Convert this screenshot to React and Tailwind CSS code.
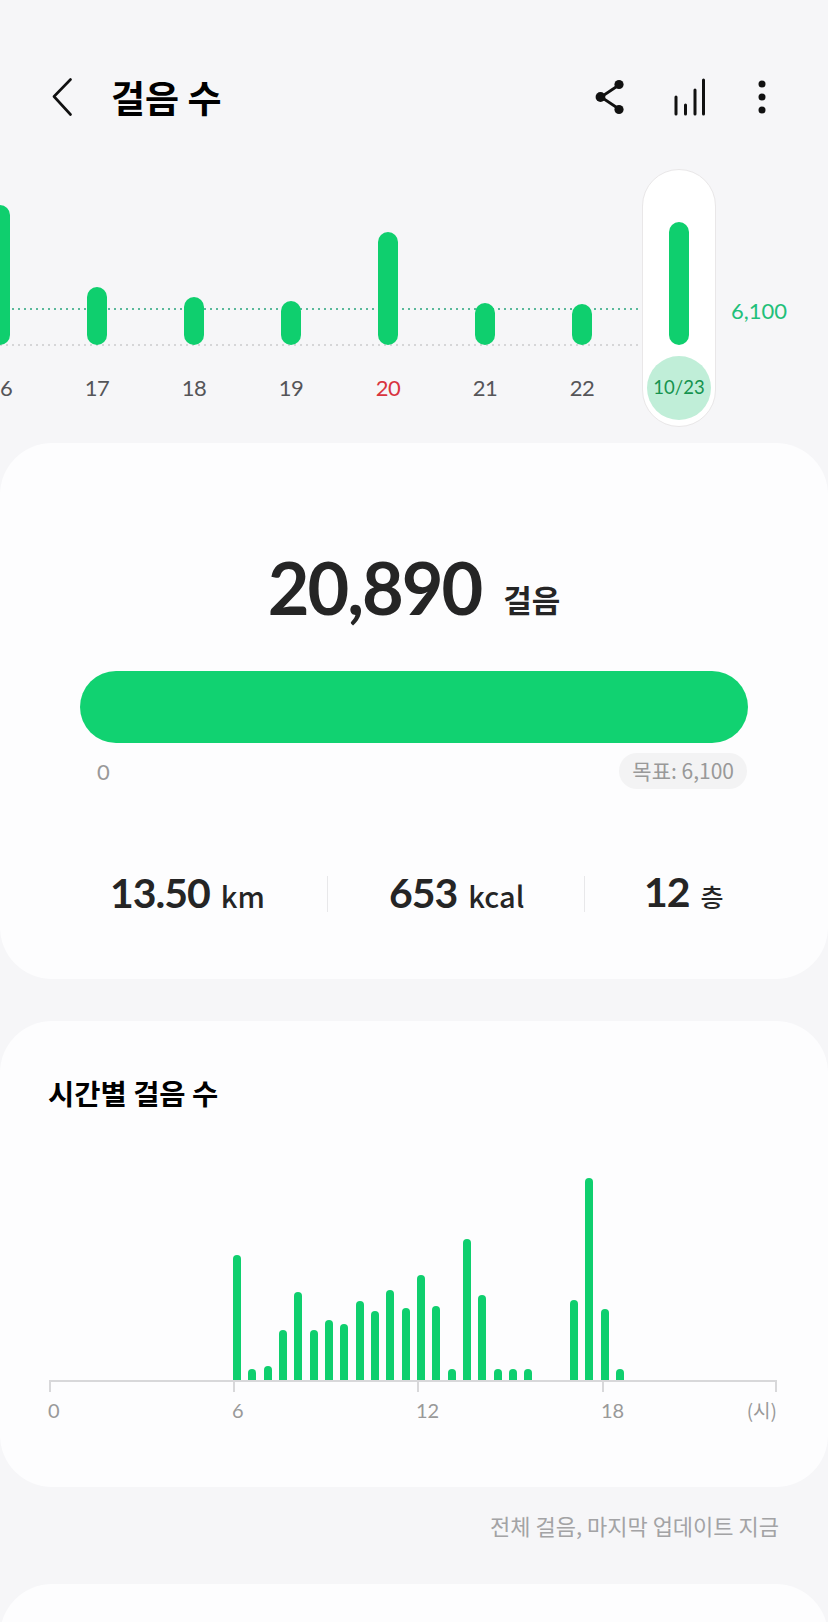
const days = [
  { label: "16", h: 140 },
  { label: "17", h: 58 },
  { label: "18", h: 48 },
  { label: "19", h: 44 },
  { label: "20", h: 113, red: true },
  { label: "21", h: 42 },
  { label: "22", h: 41 },
];
const hourly = [125, 11, 14, 50, 88, 50, 60, 56, 79, 69, 90, 72, 105, 74, 11, 141, 85, 11, 11, 11, 0, 0, 80, 202, 71, 11];
const slots = [...Array(12).fill(0), ...hourly];

const ko = "font-['Noto_Sans_CJK_KR','Lato',sans-serif]";
const lato = "font-['Lato','Noto_Sans_CJK_KR',sans-serif]";

function Stat({ value, unit, unitClass }) {
  return (
    <div className="flex items-baseline justify-center">
      <span className={`${lato} text-[41px] leading-[50px] font-bold text-[#252525] tracking-[-1px]`}>{value}</span>
      <span className={`${ko} ml-[11px] leading-[50px] font-medium text-[#252525] ${unitClass}`}>{unit}</span>
    </div>
  );
}

export default function App() {
  return (
    <div className="h-[1622px] w-[828px] overflow-hidden bg-[#f6f6f8]">
      <header className="mt-[60px] flex h-[74px] items-center pl-[52px]">
        <svg width="20" height="38" viewBox="0 0 20 38" fill="none" stroke="#111" strokeWidth="2.6" strokeLinecap="round" strokeLinejoin="round">
          <path d="M18.5 1.5 L2 18.5 L18.5 36.5" />
        </svg>
        <h1 className={`${ko} ml-[39px] text-[37px] leading-[50px] font-bold text-black`}>걸음 수</h1>
        <svg className="ml-auto" width="32" height="36" viewBox="0 0 32 36" fill="#111" stroke="#111">
          <path d="M24 6 L6 18 L24 30" fill="none" strokeWidth="2.8" />
          <circle cx="24" cy="5.5" r="4.6" stroke="none" />
          <circle cx="5.5" cy="18" r="4.9" stroke="none" />
          <circle cx="24" cy="30.5" r="4.6" stroke="none" />
        </svg>
        <svg className="ml-[46px]" width="32" height="38" viewBox="0 0 32 38" fill="none" stroke="#111" strokeWidth="3" strokeLinecap="round">
          <path d="M3 19 V36 M12.5 27 V36 M22 12 V36 M30.5 2 V36" />
        </svg>
        <svg className="ml-[53px] mr-[62px]" width="8" height="34" viewBox="0 0 8 34" fill="#111">
          <circle cx="4" cy="4" r="3.5" />
          <circle cx="4" cy="17" r="3.5" />
          <circle cx="4" cy="30" r="3.5" />
        </svg>
      </header>

      <section className="relative h-[309px] overflow-hidden">
        <div className="absolute left-0 top-[174px] h-[2px] w-[660px] bg-[repeating-linear-gradient(90deg,#5ab99b_0_2px,transparent_2px_6px)]" />
        <div className="absolute left-0 top-[210px] h-[2px] w-[660px] bg-[repeating-linear-gradient(90deg,#d6d6d8_0_2px,transparent_2px_6px)]" />
        <div className="relative flex h-full -ml-[48.5px]">
          {days.map((d) => (
            <div key={d.label} className="flex w-[97px] shrink-0 flex-col items-center">
              <div className="flex h-[211px] items-end">
                <div className="w-[20px] rounded-full bg-[#0fcf6e]" style={{ height: d.h }} />
              </div>
              <div className={`${lato} mt-[28px] text-[22px] leading-[30px] tracking-[-0.5px] ${d.red ? "text-[#d9343f]" : "text-[#555558]"}`}>{d.label}</div>
            </div>
          ))}
          <div className="relative flex w-[97px] shrink-0 flex-col items-center">
            <div className="absolute left-[11.5px] top-[35px] h-[258px] w-[74px] rounded-full border border-[#e9e7e8] bg-white" />
            <div className="relative flex h-[211px] items-end">
              <div className="h-[123px] w-[20px] rounded-full bg-[#0fcf6e]" />
            </div>
            <div className={`${lato} relative mt-[11px] flex h-[64px] w-[64px] items-center justify-center rounded-full bg-[#c0eed8] text-[18.5px] text-[#16934f]`}>10/23</div>
          </div>
        </div>
        <div className={`${lato} absolute left-[731px] top-[161px] text-[22px] leading-[32px] text-[#1fc07a]`}>6,100</div>
      </section>

      <section className="h-[536px] rounded-[52px] bg-[#fdfdfe] pt-[106px]">
        <div className="flex items-baseline justify-center">
          <span className={`${lato} text-[72px] leading-[76px] font-bold tracking-[-2px] text-[#252525]`}>20,890</span>
          <span className={`${ko} ml-[22px] -translate-y-[3px] text-[31px] leading-[40px] font-semibold text-[#252525]`}>걸음</span>
        </div>
        <div className="mx-[80px] mt-[46px] h-[72px] rounded-full bg-[#11d271]" />
        <div className="mt-[10px] flex items-center justify-between pl-[97px] pr-[81px]">
          <span className={`${lato} text-[22px] text-[#999]`}>0</span>
          <span className={`${ko} flex h-[36px] items-center rounded-full bg-[#f3f3f4] px-[13px] text-[21px] text-[#999]`}>목표: 6,100</span>
        </div>
        <div className="mt-[78px] flex items-center">
          <div className="w-[327px] pl-[110px]">
            <div className="w-fit"><Stat value="13.50" unit="km" unitClass="text-[29px]" /></div>
          </div>
          <div className="h-[36px] w-[1px] bg-[#e8e8ea]" />
          <div className="w-[256px] pl-[61px]">
            <div className="w-fit"><Stat value="653" unit="kcal" unitClass="text-[29px]" /></div>
          </div>
          <div className="h-[36px] w-[1px] bg-[#e8e8ea]" />
          <div className="pl-[59px]"><Stat value="12" unit="층" unitClass="text-[25px]" /></div>
        </div>
      </section>

      <section className="mt-[42px] h-[466px] rounded-[52px] bg-[#fdfdfe] pt-[52px]">
        <h2 className={`${ko} pl-[48px] text-[28.5px] leading-[40px] font-bold text-black`}>시간별 걸음 수</h2>
        <div className="mt-[55px] flex h-[212px] items-end pl-[49px]">
          {slots.map((h, i) => (
            <div key={i} className="w-[15.333px] shrink-0">
              {h > 0 && <div className="w-[8px] rounded-t-full bg-[#0fcf6e]" style={{ height: h }} />}
            </div>
          ))}
        </div>
        <div className="ml-[49px] flex h-[10px] w-[728px] border-t-2 border-[#d8d8da]">
          <div className="h-[10px] w-[184px] border-l-2 border-[#d8d8da]" />
          <div className="h-[10px] w-[184px] border-l-2 border-[#d8d8da]" />
          <div className="h-[10px] w-[185px] border-l-2 border-[#d8d8da]" />
          <div className="h-[10px] flex-1 border-x-2 border-[#d8d8da]" />
        </div>
        <div className={`${lato} ml-[48px] mt-[6px] flex w-[729px] text-[20px] leading-[28px] text-[#999]`}>
          <span className="w-[184px]">0</span>
          <span className="w-[184px]">6</span>
          <span className="w-[185px]">12</span>
          <span className="flex flex-1 justify-between">
            <span>18</span>
            <span className={`${ko} text-[19px]`}>(시)</span>
          </span>
        </div>
      </section>

      <p className={`${ko} mt-[22px] pr-[49px] text-right text-[22px] leading-[32px] text-[#a3a3a5]`}>전체 걸음, 마지막 업데이트 지금</p>

      <section className="mt-[43px] h-[100px] rounded-t-[52px] bg-[#fdfdfe]" />
    </div>
  );
}
